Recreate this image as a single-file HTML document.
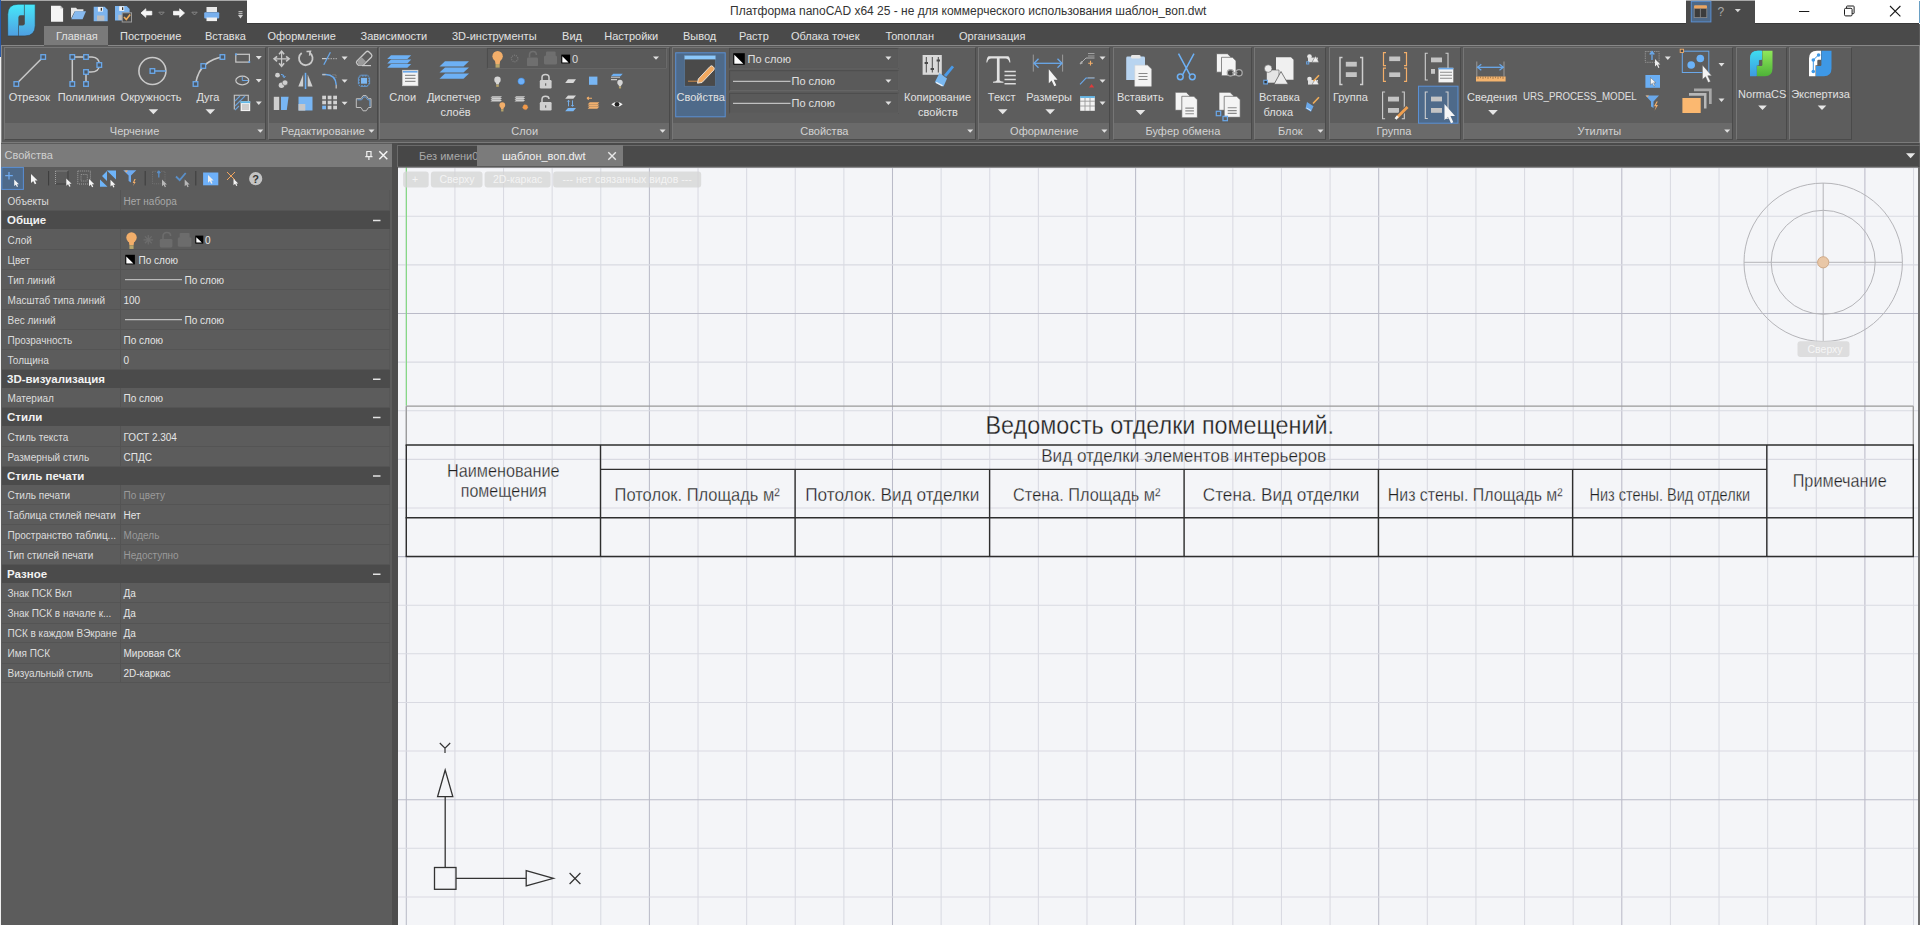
<!DOCTYPE html>
<html><head><meta charset="utf-8"><title>nanoCAD</title>
<style>html,body{margin:0;padding:0;width:1920px;height:925px;overflow:hidden;font-family:'Liberation Sans', sans-serif;}</style>
</head><body>
<div style="position:absolute;left:0px;top:0px;width:1920px;height:925px;background:#5c5c5c;"></div><div style="position:absolute;left:0px;top:0px;width:1920px;height:24px;background:#ffffff;"></div><div style="position:absolute;left:1px;top:0px;width:246px;height:24px;background:#4a4a4a;"></div><div style="position:absolute;left:1px;top:0px;width:246px;height:1px;background:#a9a9a9;"></div><div style="position:absolute;left:1686px;top:0px;width:69px;height:24px;background:#4a4a4a;"></div><div style="position:absolute;left:1686px;top:0px;width:69px;height:1px;background:#a9a9a9;"></div><div style="position:absolute;left:0px;top:0px;width:1px;height:57px;background:#2a5aa8;"></div><div style="position:absolute;left:0px;top:57px;width:1px;height:868px;background:#f0f0f0;"></div><div style="position:absolute;left:1919px;top:1px;width:1px;height:22px;background:#6aa0c4;"></div><div style="position:absolute;left:1px;top:23px;width:1918px;height:22px;background:#4a4a4a;"></div><div style="position:absolute;left:247px;top:23px;width:1439px;height:1px;background:#3a3a3a;"></div><div style="position:absolute;left:1755px;top:23px;width:164px;height:1px;background:#3a3a3a;"></div><div style="position:absolute;left:44px;top:26px;width:64px;height:20px;background:#7a7a7a;"></div><div style="position:absolute;left:1px;top:45px;width:1918px;height:98px;background:#5a5a5a;"></div><div style="position:absolute;left:1px;top:45px;width:43px;height:1px;background:#888888;"></div><div style="position:absolute;left:108px;top:45px;width:1811px;height:1px;background:#888888;"></div><div style="position:absolute;left:1px;top:142px;width:1918px;height:1px;background:#7a7a7a;"></div><div style="position:absolute;left:1px;top:45px;width:1px;height:98px;background:#888888;"></div><div style="position:absolute;left:1919px;top:45px;width:1px;height:98px;background:#888888;"></div><div style="position:absolute;left:4px;top:47px;width:260px;height:91px;background:#5d5d5d;border:1px solid #4a4a4a;border-left-color:#767676;border-top-color:#767676"></div><div style="position:absolute;left:5px;top:123px;width:260px;height:16px;background:#6a6a6a;"></div><div style="position:absolute;left:268px;top:47px;width:108px;height:91px;background:#5d5d5d;border:1px solid #4a4a4a;border-left-color:#767676;border-top-color:#767676"></div><div style="position:absolute;left:269px;top:123px;width:108px;height:16px;background:#6a6a6a;"></div><div style="position:absolute;left:379px;top:47px;width:289px;height:91px;background:#5d5d5d;border:1px solid #4a4a4a;border-left-color:#767676;border-top-color:#767676"></div><div style="position:absolute;left:380px;top:123px;width:289px;height:16px;background:#6a6a6a;"></div><div style="position:absolute;left:672px;top:47px;width:302px;height:91px;background:#5d5d5d;border:1px solid #4a4a4a;border-left-color:#767676;border-top-color:#767676"></div><div style="position:absolute;left:673px;top:123px;width:302px;height:16px;background:#6a6a6a;"></div><div style="position:absolute;left:978px;top:47px;width:130px;height:91px;background:#5d5d5d;border:1px solid #4a4a4a;border-left-color:#767676;border-top-color:#767676"></div><div style="position:absolute;left:979px;top:123px;width:130px;height:16px;background:#6a6a6a;"></div><div style="position:absolute;left:1113px;top:47px;width:137px;height:91px;background:#5d5d5d;border:1px solid #4a4a4a;border-left-color:#767676;border-top-color:#767676"></div><div style="position:absolute;left:1114px;top:123px;width:137px;height:16px;background:#6a6a6a;"></div><div style="position:absolute;left:1254px;top:47px;width:70px;height:91px;background:#5d5d5d;border:1px solid #4a4a4a;border-left-color:#767676;border-top-color:#767676"></div><div style="position:absolute;left:1255px;top:123px;width:70px;height:16px;background:#6a6a6a;"></div><div style="position:absolute;left:1329px;top:47px;width:130px;height:91px;background:#5d5d5d;border:1px solid #4a4a4a;border-left-color:#767676;border-top-color:#767676"></div><div style="position:absolute;left:1330px;top:123px;width:130px;height:16px;background:#6a6a6a;"></div><div style="position:absolute;left:1463px;top:47px;width:268px;height:91px;background:#5d5d5d;border:1px solid #4a4a4a;border-left-color:#767676;border-top-color:#767676"></div><div style="position:absolute;left:1464px;top:123px;width:268px;height:16px;background:#6a6a6a;"></div><div style="position:absolute;left:1736px;top:47px;width:49px;height:91px;background:#5d5d5d;border:1px solid #4a4a4a;border-left-color:#767676;border-top-color:#767676"></div><div style="position:absolute;left:1789px;top:47px;width:61px;height:91px;background:#5d5d5d;border:1px solid #4a4a4a;border-left-color:#767676;border-top-color:#767676"></div><div style="position:absolute;left:1px;top:143px;width:391px;height:782px;background:#5c5c5c;"></div><div style="position:absolute;left:1px;top:144px;width:391px;height:23px;background:#7b7b7b;"></div><div style="position:absolute;left:1px;top:167px;width:391px;height:23px;background:#5b5b5b;"></div><div style="position:absolute;left:392px;top:143px;width:6px;height:782px;background:#4d4d4d;"></div><div style="position:absolute;left:2px;top:190px;width:388px;height:19px;background:#5c5c5c;"></div><div style="position:absolute;left:120px;top:190px;width:1px;height:20px;background:#545454;"></div><div style="position:absolute;left:389px;top:190px;width:1px;height:20px;background:#575757;"></div><div style="position:absolute;left:2px;top:210px;width:388px;height:19px;background:#4b4b4b;"></div><div style="position:absolute;left:2px;top:229px;width:388px;height:19px;background:#5c5c5c;"></div><div style="position:absolute;left:120px;top:229px;width:1px;height:20px;background:#545454;"></div><div style="position:absolute;left:389px;top:229px;width:1px;height:20px;background:#575757;"></div><div style="position:absolute;left:2px;top:249px;width:388px;height:19px;background:#5c5c5c;"></div><div style="position:absolute;left:120px;top:249px;width:1px;height:20px;background:#545454;"></div><div style="position:absolute;left:389px;top:249px;width:1px;height:20px;background:#575757;"></div><div style="position:absolute;left:2px;top:269px;width:388px;height:19px;background:#5c5c5c;"></div><div style="position:absolute;left:120px;top:269px;width:1px;height:20px;background:#545454;"></div><div style="position:absolute;left:389px;top:269px;width:1px;height:20px;background:#575757;"></div><div style="position:absolute;left:2px;top:289px;width:388px;height:19px;background:#5c5c5c;"></div><div style="position:absolute;left:120px;top:289px;width:1px;height:20px;background:#545454;"></div><div style="position:absolute;left:389px;top:289px;width:1px;height:20px;background:#575757;"></div><div style="position:absolute;left:2px;top:309px;width:388px;height:19px;background:#5c5c5c;"></div><div style="position:absolute;left:120px;top:309px;width:1px;height:20px;background:#545454;"></div><div style="position:absolute;left:389px;top:309px;width:1px;height:20px;background:#575757;"></div><div style="position:absolute;left:2px;top:329px;width:388px;height:19px;background:#5c5c5c;"></div><div style="position:absolute;left:120px;top:329px;width:1px;height:20px;background:#545454;"></div><div style="position:absolute;left:389px;top:329px;width:1px;height:20px;background:#575757;"></div><div style="position:absolute;left:2px;top:349px;width:388px;height:19px;background:#5c5c5c;"></div><div style="position:absolute;left:120px;top:349px;width:1px;height:20px;background:#545454;"></div><div style="position:absolute;left:389px;top:349px;width:1px;height:20px;background:#575757;"></div><div style="position:absolute;left:2px;top:369px;width:388px;height:19px;background:#4b4b4b;"></div><div style="position:absolute;left:2px;top:388px;width:388px;height:18px;background:#5c5c5c;"></div><div style="position:absolute;left:120px;top:388px;width:1px;height:19px;background:#545454;"></div><div style="position:absolute;left:389px;top:388px;width:1px;height:19px;background:#575757;"></div><div style="position:absolute;left:2px;top:407px;width:388px;height:19px;background:#4b4b4b;"></div><div style="position:absolute;left:2px;top:426px;width:388px;height:19px;background:#5c5c5c;"></div><div style="position:absolute;left:120px;top:426px;width:1px;height:20px;background:#545454;"></div><div style="position:absolute;left:389px;top:426px;width:1px;height:20px;background:#575757;"></div><div style="position:absolute;left:2px;top:446px;width:388px;height:19px;background:#5c5c5c;"></div><div style="position:absolute;left:120px;top:446px;width:1px;height:20px;background:#545454;"></div><div style="position:absolute;left:389px;top:446px;width:1px;height:20px;background:#575757;"></div><div style="position:absolute;left:2px;top:466px;width:388px;height:19px;background:#4b4b4b;"></div><div style="position:absolute;left:2px;top:485px;width:388px;height:18px;background:#5c5c5c;"></div><div style="position:absolute;left:120px;top:485px;width:1px;height:19px;background:#545454;"></div><div style="position:absolute;left:389px;top:485px;width:1px;height:19px;background:#575757;"></div><div style="position:absolute;left:2px;top:504px;width:388px;height:19px;background:#5c5c5c;"></div><div style="position:absolute;left:120px;top:504px;width:1px;height:20px;background:#545454;"></div><div style="position:absolute;left:389px;top:504px;width:1px;height:20px;background:#575757;"></div><div style="position:absolute;left:2px;top:524px;width:388px;height:19px;background:#5c5c5c;"></div><div style="position:absolute;left:120px;top:524px;width:1px;height:20px;background:#545454;"></div><div style="position:absolute;left:389px;top:524px;width:1px;height:20px;background:#575757;"></div><div style="position:absolute;left:2px;top:544px;width:388px;height:19px;background:#5c5c5c;"></div><div style="position:absolute;left:120px;top:544px;width:1px;height:20px;background:#545454;"></div><div style="position:absolute;left:389px;top:544px;width:1px;height:20px;background:#575757;"></div><div style="position:absolute;left:2px;top:564px;width:388px;height:19px;background:#4b4b4b;"></div><div style="position:absolute;left:2px;top:583px;width:388px;height:18px;background:#5c5c5c;"></div><div style="position:absolute;left:120px;top:583px;width:1px;height:19px;background:#545454;"></div><div style="position:absolute;left:389px;top:583px;width:1px;height:19px;background:#575757;"></div><div style="position:absolute;left:2px;top:602px;width:388px;height:20px;background:#5c5c5c;"></div><div style="position:absolute;left:120px;top:602px;width:1px;height:21px;background:#545454;"></div><div style="position:absolute;left:389px;top:602px;width:1px;height:21px;background:#575757;"></div><div style="position:absolute;left:2px;top:623px;width:388px;height:18px;background:#5c5c5c;"></div><div style="position:absolute;left:120px;top:623px;width:1px;height:19px;background:#545454;"></div><div style="position:absolute;left:389px;top:623px;width:1px;height:19px;background:#575757;"></div><div style="position:absolute;left:2px;top:642px;width:388px;height:20px;background:#5c5c5c;"></div><div style="position:absolute;left:120px;top:642px;width:1px;height:21px;background:#545454;"></div><div style="position:absolute;left:389px;top:642px;width:1px;height:21px;background:#575757;"></div><div style="position:absolute;left:2px;top:663px;width:388px;height:18px;background:#5c5c5c;"></div><div style="position:absolute;left:120px;top:663px;width:1px;height:19px;background:#545454;"></div><div style="position:absolute;left:389px;top:663px;width:1px;height:19px;background:#575757;"></div><div style="position:absolute;left:2px;top:210px;width:388px;height:1px;background:#545454;"></div><div style="position:absolute;left:2px;top:249px;width:388px;height:1px;background:#545454;"></div><div style="position:absolute;left:2px;top:269px;width:388px;height:1px;background:#545454;"></div><div style="position:absolute;left:2px;top:289px;width:388px;height:1px;background:#545454;"></div><div style="position:absolute;left:2px;top:309px;width:388px;height:1px;background:#545454;"></div><div style="position:absolute;left:2px;top:329px;width:388px;height:1px;background:#545454;"></div><div style="position:absolute;left:2px;top:349px;width:388px;height:1px;background:#545454;"></div><div style="position:absolute;left:2px;top:369px;width:388px;height:1px;background:#545454;"></div><div style="position:absolute;left:2px;top:407px;width:388px;height:1px;background:#545454;"></div><div style="position:absolute;left:2px;top:446px;width:388px;height:1px;background:#545454;"></div><div style="position:absolute;left:2px;top:466px;width:388px;height:1px;background:#545454;"></div><div style="position:absolute;left:2px;top:504px;width:388px;height:1px;background:#545454;"></div><div style="position:absolute;left:2px;top:524px;width:388px;height:1px;background:#545454;"></div><div style="position:absolute;left:2px;top:544px;width:388px;height:1px;background:#545454;"></div><div style="position:absolute;left:2px;top:564px;width:388px;height:1px;background:#545454;"></div><div style="position:absolute;left:2px;top:602px;width:388px;height:1px;background:#545454;"></div><div style="position:absolute;left:2px;top:623px;width:388px;height:1px;background:#545454;"></div><div style="position:absolute;left:2px;top:642px;width:388px;height:1px;background:#545454;"></div><div style="position:absolute;left:2px;top:663px;width:388px;height:1px;background:#545454;"></div><div style="position:absolute;left:2px;top:682px;width:388px;height:1px;background:#545454;"></div><div style="position:absolute;left:398px;top:143px;width:1521px;height:24px;background:#4a4a4a;"></div><div style="position:absolute;left:397px;top:145px;width:1522px;height:21px;border-top:1px solid #6a6a6a;border-left:1px solid #6a6a6a"></div><div style="position:absolute;left:398px;top:146px;width:79px;height:20px;background:#474747;"></div><div style="position:absolute;left:398px;top:146px;width:79px;height:20px;overflow:hidden"><div style="position:absolute;left:21px;top:9.9px;line-height:0;white-space:pre;font-size:11px;color:#a9a9a9">Без имени0</div></div><div style="position:absolute;left:477px;top:145px;width:146px;height:21px;background:#7b7b7b;"></div><svg style="position:absolute;left:0;top:0;font-family:'Liberation Sans', sans-serif" width="1920" height="925" viewBox="0 0 1920 925"><rect x="398" y="167" width="1520" height="758" fill="#f4f5f8"/><line x1="406.30" y1="167" x2="406.30" y2="925" stroke="#babbc8" stroke-width="1.05"/><line x1="454.92" y1="167" x2="454.92" y2="925" stroke="#d9dae2" stroke-width="1.05"/><line x1="503.54" y1="167" x2="503.54" y2="925" stroke="#d9dae2" stroke-width="1.05"/><line x1="552.16" y1="167" x2="552.16" y2="925" stroke="#d9dae2" stroke-width="1.05"/><line x1="600.78" y1="167" x2="600.78" y2="925" stroke="#d9dae2" stroke-width="1.05"/><line x1="649.40" y1="167" x2="649.40" y2="925" stroke="#babbc8" stroke-width="1.05"/><line x1="698.02" y1="167" x2="698.02" y2="925" stroke="#d9dae2" stroke-width="1.05"/><line x1="746.64" y1="167" x2="746.64" y2="925" stroke="#d9dae2" stroke-width="1.05"/><line x1="795.26" y1="167" x2="795.26" y2="925" stroke="#d9dae2" stroke-width="1.05"/><line x1="843.88" y1="167" x2="843.88" y2="925" stroke="#d9dae2" stroke-width="1.05"/><line x1="892.50" y1="167" x2="892.50" y2="925" stroke="#babbc8" stroke-width="1.05"/><line x1="941.12" y1="167" x2="941.12" y2="925" stroke="#d9dae2" stroke-width="1.05"/><line x1="989.74" y1="167" x2="989.74" y2="925" stroke="#d9dae2" stroke-width="1.05"/><line x1="1038.36" y1="167" x2="1038.36" y2="925" stroke="#d9dae2" stroke-width="1.05"/><line x1="1086.98" y1="167" x2="1086.98" y2="925" stroke="#d9dae2" stroke-width="1.05"/><line x1="1135.60" y1="167" x2="1135.60" y2="925" stroke="#babbc8" stroke-width="1.05"/><line x1="1184.22" y1="167" x2="1184.22" y2="925" stroke="#d9dae2" stroke-width="1.05"/><line x1="1232.84" y1="167" x2="1232.84" y2="925" stroke="#d9dae2" stroke-width="1.05"/><line x1="1281.46" y1="167" x2="1281.46" y2="925" stroke="#d9dae2" stroke-width="1.05"/><line x1="1330.08" y1="167" x2="1330.08" y2="925" stroke="#d9dae2" stroke-width="1.05"/><line x1="1378.70" y1="167" x2="1378.70" y2="925" stroke="#babbc8" stroke-width="1.05"/><line x1="1427.32" y1="167" x2="1427.32" y2="925" stroke="#d9dae2" stroke-width="1.05"/><line x1="1475.94" y1="167" x2="1475.94" y2="925" stroke="#d9dae2" stroke-width="1.05"/><line x1="1524.56" y1="167" x2="1524.56" y2="925" stroke="#d9dae2" stroke-width="1.05"/><line x1="1573.18" y1="167" x2="1573.18" y2="925" stroke="#d9dae2" stroke-width="1.05"/><line x1="1621.80" y1="167" x2="1621.80" y2="925" stroke="#babbc8" stroke-width="1.05"/><line x1="1670.42" y1="167" x2="1670.42" y2="925" stroke="#d9dae2" stroke-width="1.05"/><line x1="1719.04" y1="167" x2="1719.04" y2="925" stroke="#d9dae2" stroke-width="1.05"/><line x1="1767.66" y1="167" x2="1767.66" y2="925" stroke="#d9dae2" stroke-width="1.05"/><line x1="1816.28" y1="167" x2="1816.28" y2="925" stroke="#d9dae2" stroke-width="1.05"/><line x1="1864.90" y1="167" x2="1864.90" y2="925" stroke="#babbc8" stroke-width="1.05"/><line x1="1913.52" y1="167" x2="1913.52" y2="925" stroke="#d9dae2" stroke-width="1.05"/><line x1="398" y1="167.64" x2="1918" y2="167.64" stroke="#d9dae2" stroke-width="1.05"/><line x1="398" y1="216.26" x2="1918" y2="216.26" stroke="#d9dae2" stroke-width="1.05"/><line x1="398" y1="264.88" x2="1918" y2="264.88" stroke="#d9dae2" stroke-width="1.05"/><line x1="398" y1="313.50" x2="1918" y2="313.50" stroke="#babbc8" stroke-width="1.05"/><line x1="398" y1="362.12" x2="1918" y2="362.12" stroke="#d9dae2" stroke-width="1.05"/><line x1="398" y1="410.74" x2="1918" y2="410.74" stroke="#d9dae2" stroke-width="1.05"/><line x1="398" y1="459.36" x2="1918" y2="459.36" stroke="#d9dae2" stroke-width="1.05"/><line x1="398" y1="507.98" x2="1918" y2="507.98" stroke="#d9dae2" stroke-width="1.05"/><line x1="398" y1="556.60" x2="1918" y2="556.60" stroke="#babbc8" stroke-width="1.05"/><line x1="398" y1="605.22" x2="1918" y2="605.22" stroke="#d9dae2" stroke-width="1.05"/><line x1="398" y1="653.84" x2="1918" y2="653.84" stroke="#d9dae2" stroke-width="1.05"/><line x1="398" y1="702.46" x2="1918" y2="702.46" stroke="#d9dae2" stroke-width="1.05"/><line x1="398" y1="751.08" x2="1918" y2="751.08" stroke="#d9dae2" stroke-width="1.05"/><line x1="398" y1="799.70" x2="1918" y2="799.70" stroke="#babbc8" stroke-width="1.05"/><line x1="398" y1="848.32" x2="1918" y2="848.32" stroke="#d9dae2" stroke-width="1.05"/><line x1="398" y1="896.94" x2="1918" y2="896.94" stroke="#d9dae2" stroke-width="1.05"/><line x1="406.3" y1="406.2" x2="1913.3" y2="406.2" stroke="#9a9a9a" stroke-width="1.3"/><line x1="406.3" y1="406.2" x2="406.3" y2="445" stroke="#9a9a9a" stroke-width="1.3"/><line x1="1913.3" y1="406.2" x2="1913.3" y2="445" stroke="#9a9a9a" stroke-width="1.3"/><line x1="405.6" y1="445" x2="1914.0" y2="445" stroke="#2e2e2e" stroke-width="1.4"/><line x1="600.5" y1="469.4" x2="1766.8" y2="469.4" stroke="#2e2e2e" stroke-width="1.4"/><line x1="405.6" y1="517.7" x2="1914.0" y2="517.7" stroke="#2e2e2e" stroke-width="1.4"/><line x1="405.6" y1="556.5" x2="1914.0" y2="556.5" stroke="#2e2e2e" stroke-width="1.4"/><line x1="406.3" y1="445" x2="406.3" y2="556.5" stroke="#2e2e2e" stroke-width="1.4"/><line x1="600.5" y1="445" x2="600.5" y2="556.5" stroke="#2e2e2e" stroke-width="1.4"/><line x1="1766.8" y1="445" x2="1766.8" y2="556.5" stroke="#2e2e2e" stroke-width="1.4"/><line x1="1913.3" y1="445" x2="1913.3" y2="556.5" stroke="#2e2e2e" stroke-width="1.4"/><line x1="795.1" y1="469.4" x2="795.1" y2="556.5" stroke="#2e2e2e" stroke-width="1.4"/><line x1="989.6" y1="469.4" x2="989.6" y2="556.5" stroke="#2e2e2e" stroke-width="1.4"/><line x1="1184.1" y1="469.4" x2="1184.1" y2="556.5" stroke="#2e2e2e" stroke-width="1.4"/><line x1="1378.4" y1="469.4" x2="1378.4" y2="556.5" stroke="#2e2e2e" stroke-width="1.4"/><line x1="1572.6" y1="469.4" x2="1572.6" y2="556.5" stroke="#2e2e2e" stroke-width="1.4"/><line x1="406.4" y1="167" x2="406.4" y2="405.6" stroke="#86d986" stroke-width="1.2"/><text x="985.5" y="433.6" font-size="25" fill="#1e1e1e" stroke="#f4f5f8" stroke-width="0.3" textLength="348.5" lengthAdjust="spacingAndGlyphs">Ведомость отделки помещений.</text><text x="1041.2" y="462.3" font-size="18.5" fill="#1e1e1e" stroke="#f4f5f8" stroke-width="0.3" textLength="285.0" lengthAdjust="spacingAndGlyphs">Вид отделки элементов интерьеров</text><text x="447" y="477.4" font-size="18.5" fill="#1e1e1e" stroke="#f4f5f8" stroke-width="0.3" textLength="112.5" lengthAdjust="spacingAndGlyphs">Наименование</text><text x="460.8" y="497.2" font-size="18.5" fill="#1e1e1e" stroke="#f4f5f8" stroke-width="0.3" textLength="85.8" lengthAdjust="spacingAndGlyphs">помещения</text><text x="614.6" y="501.1" font-size="18.5" fill="#1e1e1e" stroke="#f4f5f8" stroke-width="0.3" textLength="165.2" lengthAdjust="spacingAndGlyphs">Потолок. Площадь м²</text><text x="805.2" y="501.1" font-size="18.5" fill="#1e1e1e" stroke="#f4f5f8" stroke-width="0.3" textLength="174.1" lengthAdjust="spacingAndGlyphs">Потолок. Вид отделки</text><text x="1013.1" y="501.1" font-size="18.5" fill="#1e1e1e" stroke="#f4f5f8" stroke-width="0.3" textLength="147.3" lengthAdjust="spacingAndGlyphs">Стена. Площадь м²</text><text x="1202.8" y="501.1" font-size="18.5" fill="#1e1e1e" stroke="#f4f5f8" stroke-width="0.3" textLength="156.6" lengthAdjust="spacingAndGlyphs">Стена. Вид отделки</text><text x="1387.8" y="501.1" font-size="18.5" fill="#1e1e1e" stroke="#f4f5f8" stroke-width="0.3" textLength="174.8" lengthAdjust="spacingAndGlyphs">Низ стены. Площадь м²</text><text x="1589.5" y="501.1" font-size="18.5" fill="#1e1e1e" stroke="#f4f5f8" stroke-width="0.3" textLength="160.6" lengthAdjust="spacingAndGlyphs">Низ стены. Вид отделки</text><text x="1792.7" y="487.1" font-size="18.5" fill="#1e1e1e" stroke="#f4f5f8" stroke-width="0.3" textLength="94.0" lengthAdjust="spacingAndGlyphs">Примечание</text><rect x="434.5" y="867.5" width="21.5" height="21.8" fill="none" stroke="#333333" stroke-width="1.3"/><line x1="445.2" y1="867.5" x2="445.2" y2="796.6" stroke="#333333" stroke-width="1.3"/><path d="M445.2 770 L437.6 796.6 L452.8 796.6 Z" fill="none" stroke="#333333" stroke-width="1.3" stroke-linejoin="miter"/><line x1="456" y1="878.3" x2="526.2" y2="878.3" stroke="#333333" stroke-width="1.3"/><path d="M553.5 878.3 L526.2 870.7 L526.2 886 Z" fill="none" stroke="#333333" stroke-width="1.3"/><path d="M439.8 743 L445 748.2 L450.2 743 M445 748.2 L445 753" fill="none" stroke="#333333" stroke-width="1.2"/><path d="M569.6 873 L580.4 884 M580.4 873 L569.6 884" fill="none" stroke="#333333" stroke-width="1.2"/><circle cx="1823.2" cy="262.3" r="79.2" fill="none" stroke="#b4b4b8" stroke-width="1"/><circle cx="1823.2" cy="262.3" r="52" fill="none" stroke="#b4b4b8" stroke-width="1"/><line x1="1744" y1="262.3" x2="1902.4" y2="262.3" stroke="#b4b4b8" stroke-width="1"/><line x1="1823.2" y1="183" x2="1823.2" y2="341.5" stroke="#b4b4b8" stroke-width="1"/><circle cx="1823.2" cy="262.3" r="5.6" fill="#e9c7a6" stroke="#cfa987" stroke-width="1"/><rect x="1797.5" y="341.2" width="52" height="15.8" rx="3" fill="#dadada" fill-opacity="0.9"/><text x="1807.5" y="353" font-size="10.5" fill="#f6f6f6">Сверху</text><rect x="403.1" y="171.6" width="25.6" height="15.8" rx="3" fill="#d4d4d4" fill-opacity="0.75"/><text x="412" y="183.3" font-size="10.5" fill="#f4f4f4">+</text><rect x="430.9" y="171.6" width="51.6" height="15.8" rx="3" fill="#d4d4d4" fill-opacity="0.75"/><text x="439.5" y="183.3" font-size="10.5" fill="#f4f4f4">Сверху</text><rect x="484.6" y="171.6" width="66.0" height="15.8" rx="3" fill="#d4d4d4" fill-opacity="0.75"/><text x="493" y="183.3" font-size="10.5" fill="#f4f4f4">2D-каркас</text><rect x="553.1" y="171.6" width="148.1" height="15.8" rx="3" fill="#d4d4d4" fill-opacity="0.75"/><text x="562.5" y="183.3" font-size="10.5" fill="#f4f4f4">--- нет связанных видов ---</text><rect x="1918" y="167" width="2" height="758" fill="#6e6e6e"/><rect x="398" y="166.5" width="1520" height="1.2" fill="#6a6a6a"/></svg><svg style="position:absolute;left:0;top:0;font-family:'Liberation Sans', sans-serif" width="1920" height="925" viewBox="0 0 1920 925"><defs><linearGradient id="lg1" x1="0" y1="0" x2="0" y2="1"><stop offset="0" stop-color="#46e8f9"/><stop offset="1" stop-color="#4f9fe2"/></linearGradient><linearGradient id="ncs" x1="0" y1="0" x2="1" y2="1"><stop offset="0" stop-color="#3fe0f0"/><stop offset="1" stop-color="#3f8fe0"/></linearGradient></defs><path d="M7.7 35.9 L7.7 14.5 Q7.7 4.3 18 4.3 L35.2 4.3 L35.2 25.5 Q35.2 35.9 25 35.9 Z" fill="url(#lg1)" stroke="#2f3f48" stroke-width="0.6"/><path d="M18.4 17.5 Q18.4 15.2 20.6 15.2 L24.8 15.2 L24.8 23.3 Q24.8 25.5 22.6 25.5 L18.4 25.5 Z" fill="#4a4a4a"/><line x1="24.4" y1="4.3" x2="24.4" y2="15.5" stroke="#3a4a55" stroke-width="0.7"/><line x1="18.5" y1="25.3" x2="18.5" y2="35.9" stroke="#3a4a55" stroke-width="0.7"/><path d="M51 5.8 L60.5 5.8 L63.1 8.4 L63.1 21.7 L51 21.7 Z" fill="#f4f4f4"/><path d="M60.5 5.8 L60.5 8.4 L63.1 8.4" fill="#bdbdbd"/><path d="M71 18.5 L71 7.8 L76 7.8 L77.3 9.3 L83.4 9.3 L83.4 11.5 L74.6 11.5 Z" fill="#e6e6e6"/><path d="M71.3 19.2 L75 11.2 L86 11.2 L82.6 19.2 Z" fill="#86b9ee"/><path d="M93.7 6.7 L104.7 6.7 L107.7 9.7 L107.7 21.3 L93.7 21.3 Z" fill="#7cb4ee"/><rect x="97.9" y="7.0" width="5" height="4.6" fill="#f2f2f2"/><rect x="100.7" y="7.9" width="1.3" height="2.8" fill="#333"/><rect x="97.0" y="15.5" width="7.4" height="5.2" fill="#bdbdbd"/><path d="M115 6 L126.6 6 L129.6 9 L129.6 20.5 L115 20.5 Z" fill="#7cb4ee"/><rect x="119.2" y="6.3" width="5" height="4.6" fill="#f2f2f2"/><rect x="122" y="7.2" width="1.3" height="2.8" fill="#333"/><rect x="118.3" y="14.8" width="7.4" height="5.2" fill="#bdbdbd"/><rect x="122.2" y="12.8" width="9.3" height="9.2" fill="#4a4a4a" stroke="#9a9a9a" stroke-width="1"/><path d="M124 17 L126.3 19.6 L130.2 14.6" fill="none" stroke="#f2ae5a" stroke-width="1.6"/><path d="M141 13 L145.8 8.8 L145.8 11.3 L151.8 11.3 L151.8 14.9 L145.8 14.9 L145.8 17.3 Z" fill="#f6f6f6" stroke="#f6f6f6" stroke-width="0.8" stroke-linejoin="round"/><path d="M184.5 13 L179.7 8.8 L179.7 11.3 L173.5 11.3 L173.5 14.9 L179.7 14.9 L179.7 17.3 Z" fill="#f6f6f6" stroke="#f6f6f6" stroke-width="0.8" stroke-linejoin="round"/><path d="M158.8 12.2 L164.2 12.2 L161.5 15 Z" fill="none" stroke="#8a8a8a" stroke-width="0.9"/><path d="M191.8 12.2 L197.2 12.2 L194.5 15 Z" fill="none" stroke="#8a8a8a" stroke-width="0.9"/><rect x="206.5" y="7" width="10.5" height="5" fill="#e8e8e8"/><rect x="204.2" y="12.2" width="15" height="6.2" rx="1" fill="#78b0ee"/><rect x="206.5" y="17.5" width="10.5" height="3.6" fill="#f0f0f0"/><rect x="238.5" y="11.2" width="4" height="1" fill="#cfcfcf"/><rect x="238.5" y="13.2" width="4" height="1" fill="#cfcfcf"/><path d="M238 15 L243 15 L240.5 18.5 Z" fill="#cfcfcf"/><line x1="1799" y1="11.5" x2="1809.3" y2="11.5" stroke="#1a1a1a" stroke-width="1"/><rect x="1844.5" y="8.3" width="7.6" height="7.6" rx="1.2" fill="none" stroke="#1a1a1a" stroke-width="1"/><path d="M1846.6 8.2 L1846.6 6.6 Q1846.6 6 1847.3 6 L1853.4 6 Q1854.1 6 1854.1 6.7 L1854.1 12.9 Q1854.1 13.6 1853.4 13.6 L1852.2 13.6" fill="none" stroke="#1a1a1a" stroke-width="1"/><path d="M1890 6 L1900.4 16.4 M1900.4 6 L1890 16.4" stroke="#1a1a1a" stroke-width="1.1"/><rect x="1691.3" y="1.3" width="19.6" height="20.6" fill="#4e6988" stroke="#5b90d2" stroke-width="1"/><rect x="1694.2" y="8" width="12.6" height="9.6" fill="#3c3c3c" stroke="#8a8a8a" stroke-width="0.8"/><rect x="1694" y="5.2" width="13" height="3.2" rx="1" fill="#eaa562"/><line x1="1700.4" y1="8.2" x2="1700.4" y2="17.5" stroke="#8a8a8a" stroke-width="0.8"/><text x="1717.6" y="16" font-size="12" fill="#a9a9a9">?</text><path d="M1734.80 8.90 L1740.80 8.90 L1737.8 12.30 Z" fill="#d8d8d8"/><line x1="16.3" y1="84" x2="43.2" y2="57" stroke="#c9c9c9" stroke-width="1.5"/><rect x="14.00" y="81.70" width="4.6" height="4.6" fill="#4c5866" stroke="#6aa8ea" stroke-width="1.3"/><rect x="40.90" y="54.70" width="4.6" height="4.6" fill="#4c5866" stroke="#6aa8ea" stroke-width="1.3"/><path d="M72.3 84 L72.3 57 L92 57 Q99.5 57.5 99.5 65 Q99 72 91 72 L86 72 L86 84" fill="none" stroke="#c9c9c9" stroke-width="1.5"/><rect x="70.00" y="54.70" width="4.6" height="4.6" fill="#4c5866" stroke="#6aa8ea" stroke-width="1.3"/><rect x="83.70" y="54.70" width="4.6" height="4.6" fill="#4c5866" stroke="#6aa8ea" stroke-width="1.3"/><rect x="97.00" y="62.70" width="4.6" height="4.6" fill="#4c5866" stroke="#6aa8ea" stroke-width="1.3"/><rect x="83.70" y="69.70" width="4.6" height="4.6" fill="#4c5866" stroke="#6aa8ea" stroke-width="1.3"/><rect x="70.00" y="81.70" width="4.6" height="4.6" fill="#4c5866" stroke="#6aa8ea" stroke-width="1.3"/><rect x="83.70" y="81.70" width="4.6" height="4.6" fill="#4c5866" stroke="#6aa8ea" stroke-width="1.3"/><circle cx="152.4" cy="71" r="13.5" fill="none" stroke="#c9c9c9" stroke-width="1.6"/><line x1="152.4" y1="71" x2="166" y2="71" stroke="#6aa8ea" stroke-width="1.5"/><rect x="150.10" y="68.70" width="4.6" height="4.6" fill="#4c5866" stroke="#6aa8ea" stroke-width="1.3"/><path d="M148.60 109.2 L158.20 109.2 L153.4 114.2 Z" fill="#e6e6e6"/><path d="M205.50 109.2 L215.10 109.2 L210.3 114.2 Z" fill="#e6e6e6"/><path d="M195.5 84 Q198 70 206 64 Q213 58.5 222.4 57" fill="none" stroke="#c9c9c9" stroke-width="1.6"/><rect x="193.20" y="81.70" width="4.6" height="4.6" fill="#4c5866" stroke="#6aa8ea" stroke-width="1.3"/><rect x="201.00" y="63.70" width="4.6" height="4.6" fill="#4c5866" stroke="#6aa8ea" stroke-width="1.3"/><rect x="220.10" y="54.70" width="4.6" height="4.6" fill="#4c5866" stroke="#6aa8ea" stroke-width="1.3"/><rect x="235.8" y="54.3" width="13.6" height="7.8" fill="none" stroke="#c9c9c9" stroke-width="1.2"/><circle cx="236" cy="54.4" r="1.1" fill="#6aa8ea"/><circle cx="249.3" cy="62" r="1.1" fill="#6aa8ea"/><ellipse cx="242.3" cy="80.5" rx="6.5" ry="4.3" fill="none" stroke="#c9c9c9" stroke-width="1.2"/><path d="M242.3 77 L242.3 80.5 L248 80.5" fill="none" stroke="#6aa8ea" stroke-width="1"/><path d="M234.3 109.5 L234.3 95.3 L248.3 95.3 L248.3 101" fill="none" stroke="#c9c9c9" stroke-width="1.1"/><path d="M235 101 L240 96 M235 106 L245 96 M235 110 L239 106" stroke="#6aa0d8" stroke-width="1.1"/><rect x="240.6" y="101.3" width="9.6" height="9.8" fill="#f2f2f2"/><rect x="240.6" y="101.3" width="9.6" height="1.8" fill="#60b8e8"/><path d="M242 105 H249 M242 107 H249 M242 109 H249" stroke="#9a9a9a" stroke-width="0.8"/><path d="M255.80 56.00 L261.80 56.00 L258.8 59.40 Z" fill="#e0e0e0"/><path d="M255.80 79.00 L261.80 79.00 L258.8 82.40 Z" fill="#e0e0e0"/><path d="M255.80 101.60 L261.80 101.60 L258.8 105.00 Z" fill="#e0e0e0"/><path d="M257.30 129.40 L263.30 129.40 L260.3 132.80 Z" fill="#e0e0e0"/><path d="M281.6 51.8 V65.8 M274.6 58.8 H288.6" stroke="#c9c9c9" stroke-width="1.2"/><path d="M279.1 54.3 L281.6 51.3 L284.1 54.3 M279.1 63.3 L281.6 66.3 L284.1 63.3 M277.1 56.3 L274.1 58.8 L277.1 61.3 M286.1 56.3 L289.1 58.8 L286.1 61.3" fill="none" stroke="#c9c9c9" stroke-width="1.6"/><path d="M309.3 52.6 A6.8 6.8 0 1 1 301.7 53" fill="none" stroke="#c9c9c9" stroke-width="1.8"/><path d="M306.5 51.5 L310.5 51.3 L309.5 55.6" fill="none" stroke="#c9c9c9" stroke-width="1.5"/><path d="M322 58.6 H327" stroke="#c9c9c9" stroke-width="1.2"/><path d="M328 58.6 H338" stroke="#a0a0a0" stroke-width="1.2" stroke-dasharray="1.5 1"/><path d="M323.8 64.8 L330.4 52.2" stroke="#6aa8ea" stroke-width="1.3"/><path d="M341.60 56.60 L347.60 56.60 L344.6 60.00 Z" fill="#e0e0e0"/><path d="M357 61 L366 52 Q367.5 50.6 369 52 L371.3 54.3 Q372.6 55.8 371.3 57.2 L363 65.4 L358.6 65.4 L357 63.8 Q355.8 62.4 357 61 Z" fill="none" stroke="#c9c9c9" stroke-width="1.3"/><path d="M357.5 61 L361.5 57 L366 61.5 L362 65.4 L358.6 65.4 Z" fill="#9a9a9a"/><line x1="362" y1="65.6" x2="371" y2="65.6" stroke="#c9c9c9" stroke-width="1.2"/><circle cx="277.5" cy="75.2" r="2.4" fill="#cfcfcf"/><circle cx="281.5" cy="85.2" r="2.8" fill="#cfcfcf"/><circle cx="285" cy="82.7" r="2.8" fill="#cfcfcf" stroke="#5d5d5d" stroke-width="0.6"/><path d="M281 74.5 Q283.5 74.3 284 76.8" fill="none" stroke="#6aa8ea" stroke-width="1.1"/><path d="M282.8 76.3 L284.2 77.8 L285.4 76" fill="none" stroke="#6aa8ea" stroke-width="1"/><path d="M298.3 86.5 L303.2 74.5 L303.2 86.5 Z" fill="#cfcfcf"/><path d="M312.6 86.5 L307.7 74.5 L307.7 86.5 Z" fill="#cfcfcf"/><line x1="305.5" y1="72.8" x2="305.5" y2="89" stroke="#6db0f4" stroke-width="1.6"/><path d="M322.3 74.6 H325.6 Q335.6 74.8 336.2 85" fill="none" stroke="#6aa8ea" stroke-width="1.5"/><path d="M322.3 74.6 H325.6" stroke="#bdbdbd" stroke-width="1.3"/><path d="M336.2 85 V88.4" stroke="#bdbdbd" stroke-width="1.3"/><path d="M332.5 74.8 H336 V78" fill="none" stroke="#a0a0a0" stroke-width="0.8" stroke-dasharray="1 1"/><path d="M341.60 79.40 L347.60 79.40 L344.6 82.80 Z" fill="#e0e0e0"/><rect x="361" y="77.9" width="6" height="5.8" fill="#7db8f2"/><rect x="359.2" y="76" width="9.6" height="9.6" fill="none" stroke="#5fa0e0" stroke-width="0.9" stroke-dasharray="1.6 1.2"/><path d="M358.4 77.5 V84.2 M369.6 77.5 V84.2 M360.5 75.2 H367.5 M360.5 86.4 H367.5" stroke="#6aa8ea" stroke-width="0.8"/><rect x="273.8" y="96.8" width="5.4" height="13.2" fill="#cfcfcf"/><path d="M281 96.8 L288.6 96.8 L286.8 110 L281 110 Z" fill="#78b6f4"/><rect x="298.5" y="96.7" width="14" height="13.8" fill="#78b6f4"/><rect x="298.5" y="104" width="6.8" height="6.6" fill="#c6c6c6"/><rect x="322.2" y="95.7" width="3.8" height="3.6" fill="#d2d2d2"/><rect x="322.2" y="100.7" width="3.8" height="3.6" fill="#d2d2d2"/><rect x="322.2" y="105.7" width="3.8" height="3.6" fill="#78b6f4"/><rect x="327.7" y="95.7" width="3.8" height="3.6" fill="#d2d2d2"/><rect x="327.7" y="100.7" width="3.8" height="3.6" fill="#d2d2d2"/><rect x="327.7" y="105.7" width="3.8" height="3.6" fill="#d2d2d2"/><rect x="333.2" y="95.7" width="3.8" height="3.6" fill="#d2d2d2"/><rect x="333.2" y="100.7" width="3.8" height="3.6" fill="#d2d2d2"/><rect x="333.2" y="105.7" width="3.8" height="3.6" fill="#d2d2d2"/><path d="M341.60 101.70 L347.60 101.70 L344.6 105.10 Z" fill="#e0e0e0"/><path d="M356.3 98.7 H361 L363 95.6 H366.2 L368.5 98.7 H371 V107.5 H368.5 L366.2 110.8 H363 L361 107.5 H356.3 Z" fill="none" stroke="#c0c0c0" stroke-width="1"/><path d="M357.4 99.8 H361.6 L363.6 96.9 H365.6 L367.8 99.8 H369.9 V106.4" fill="none" stroke="#6aa8ea" stroke-width="0.9"/><path d="M368.50 129.40 L374.50 129.40 L371.5 132.80 Z" fill="#e0e0e0"/><path d="M391.0 55.3 L411.2 55.3 L407.4 59.099999999999994 L387.2 59.099999999999994 Z" fill="#6db0f4"/><path d="M391.0 59.599999999999994 L411.2 59.599999999999994 L407.4 63.39999999999999 L387.2 63.39999999999999 Z" fill="#6db0f4"/><path d="M391.0 63.9 L411.2 63.9 L407.4 67.7 L387.2 67.7 Z" fill="#6db0f4"/><rect x="402.5" y="70.2" width="15.5" height="15.6" fill="#f4f4f4" stroke="#d0d0d0" stroke-width="0.6"/><rect x="403" y="71" width="14.5" height="1.6" fill="#6aa8ea"/><path d="M405 75.3 H415.5 M405 78.3 H415.5 M405 81.3 H415.5" stroke="#8f8f8f" stroke-width="1.3"/><path d="M445.0 61.3 L469.0 61.3 L463.5 66.5 L439.5 66.5 Z" fill="#6db0f4"/><path d="M445.0 67.39999999999999 L469.0 67.39999999999999 L463.5 72.6 L439.5 72.6 Z" fill="#6db0f4"/><path d="M445.0 73.5 L469.0 73.5 L463.5 78.7 L439.5 78.7 Z" fill="#6db0f4"/><rect x="487.4" y="48.4" width="179" height="20" fill="#5a5a5a" stroke="#4c4c4c" stroke-width="1"/><path d="M487.4 68.4 H666.5 V48.4" fill="none" stroke="#6a6a6a" stroke-width="1"/><circle cx="497.6" cy="56.2" r="5.2" fill="#f2ae6a"/><path d="M494.74 59.32 L500.46 59.32 L499.68 64.00 L495.52 64.00 Z" fill="#f2ae6a"/><rect x="495.52" y="64.00" width="4.16" height="3.64" fill="#b8a56a"/><circle cx="514.6" cy="58.5" r="3.2" fill="none" stroke="#7a7a7a" stroke-width="1.4" stroke-dasharray="1 1"/><path d="M529.5 57.5 V55 Q529.5 51.5 533 51.5 Q536.4 51.5 536.4 55" fill="none" stroke="#6f6f6f" stroke-width="1.6"/><rect x="527" y="57.5" width="11" height="8.6" rx="1.2" fill="#6f6f6f"/><rect x="546" y="51.5" width="9.6" height="5" rx="1" fill="#6f6f6f"/><rect x="544" y="55.5" width="13" height="9" rx="1.5" fill="#6f6f6f"/><rect x="561.3" y="54.6" width="8.8" height="8.8" fill="#000"/><path d="M562.3 56.2 L568.5999999999999 62.400000000000006 L562.3 62.400000000000006 Z" fill="#fff"/><text x="572" y="62.7" font-size="11" fill="#dcdcdc">0</text><path d="M653.00 56.40 L659.00 56.40 L656 59.80 Z" fill="#e0e0e0"/><circle cx="497.5" cy="79.8" r="3.2" fill="#d6d6d6"/><path d="M495.74 81.72 L499.26 81.72 L498.78 84.60 L496.22 84.60 Z" fill="#d6d6d6"/><rect x="496.22" y="84.60" width="2.56" height="2.24" fill="#b8a56a"/><circle cx="521.3" cy="81.3" r="3.3" fill="#6fb0f8" stroke="#3b8ee8" stroke-width="1" stroke-dasharray="1 0.8"/><path d="M542 80 V77.5 Q542 74.6 545.5 74.6 Q549 74.6 549 77.5 V80" fill="none" stroke="#d0d0d0" stroke-width="1.5"/><rect x="539.8" y="80" width="11.8" height="8.4" rx="1.2" fill="#d0d0d0"/><rect x="545.2" y="83.3" width="1" height="2.4" fill="#555"/><path d="M565.2 83 L568 79.3 L576 79.3 L573.3 83 Z" fill="#d8d8d8"/><rect x="589" y="76.6" width="8.4" height="8.2" fill="#78b6f4"/><path d="M613.2 73.7 L622.7 73.7 L620.5 76.3 L611 76.3 Z" fill="#6db0f4"/><path d="M611 77.3 H620 M611 79.6 H617" stroke="#c8c8c8" stroke-width="1.1"/><circle cx="620" cy="82.5" r="2.7" fill="#d6d6d6"/><path d="M618.51 84.12 L621.49 84.12 L621.08 86.55 L618.92 86.55 Z" fill="#d6d6d6"/><rect x="618.92" y="86.55" width="2.16" height="1.89" fill="#b8a56a"/><path d="M492.1 96.2 L502.0 96.2 L500.4 97.8 L490.5 97.8 Z" fill="#cfcfcf"/><path d="M492.1 98.10000000000001 L502.0 98.10000000000001 L500.4 99.7 L490.5 99.7 Z" fill="#cfcfcf"/><path d="M492.1 100.0 L502.0 100.0 L500.4 101.6 L490.5 101.6 Z" fill="#cfcfcf"/><circle cx="502.3" cy="105.10000000000001" r="2.9" fill="#f2ae6a"/><path d="M500.70 106.84 L503.90 106.84 L503.46 109.45 L501.14 109.45 Z" fill="#f2ae6a"/><rect x="501.14" y="109.45" width="2.32" height="2.03" fill="#b8a56a"/><path d="M516.1 96.2 L525.1 96.2 L523.5 97.8 L514.5 97.8 Z" fill="#cfcfcf"/><path d="M516.1 98.10000000000001 L525.1 98.10000000000001 L523.5 99.7 L514.5 99.7 Z" fill="#cfcfcf"/><path d="M516.1 100.0 L525.1 100.0 L523.5 101.6 L514.5 101.6 Z" fill="#cfcfcf"/><circle cx="525.3" cy="107.2" r="2.4" fill="#f29a4a" stroke="#f29a4a" stroke-width="0.8" stroke-dasharray="0.9 0.6"/><path d="M542 102 V99.5 Q542 96.3 545.5 96.3 Q549 96.3 549 99" fill="none" stroke="#d0d0d0" stroke-width="1.5"/><rect x="539.8" y="102" width="11.8" height="8.4" rx="1.2" fill="#d0d0d0"/><rect x="545.2" y="105.3" width="1" height="2.4" fill="#555"/><path d="M565.2 98.7 L568 95.6 L576 95.6 L573.3 98.7 Z" fill="#d8d8d8"/><path d="M565.2 111.3 L568 108.1 L576 108.1 L573.3 111.3 Z" fill="#78b6f4"/><path d="M568.5 106.3 V100.4 M567.3 101.6 L568.5 100.3 L569.7 101.6 M572.5 100.4 V106.3 M571.3 105 L572.5 106.3 L573.7 105" fill="none" stroke="#78b6f4" stroke-width="0.9"/><path d="M587 98.3 L592 98.3 M587 98.3 L588.8 97 M587 98.3 L588.8 99.6" stroke="#f2ae6a" stroke-width="1.1" fill="none"/><path d="M589.7 102.3 L599.3000000000001 102.3 L597.3000000000001 104.5 L587.7 104.5 Z" fill="#f2b06e"/><path d="M589.7 104.39999999999999 L599.3000000000001 104.39999999999999 L597.3000000000001 106.6 L587.7 106.6 Z" fill="#f2b06e"/><path d="M589.7 106.5 L599.3000000000001 106.5 L597.3000000000001 108.7 L587.7 108.7 Z" fill="#f2b06e"/><path d="M611.3 104.3 Q617 99.3 622.7 104.3 Q617 109.3 611.3 104.3 Z" fill="#f4f4f4"/><circle cx="617" cy="104.3" r="2.4" fill="#222"/><path d="M659.60 129.40 L665.60 129.40 L662.6 132.80 Z" fill="#e0e0e0"/><rect x="675.7" y="52.8" width="49.5" height="64" fill="#4e6a8a" stroke="#5a90d4" stroke-width="1"/><rect x="684.5" y="55.6" width="31" height="30.6" fill="#4a4a4a" stroke="#5c7fa5" stroke-width="0.6"/><rect x="684.5" y="55.6" width="31" height="3.8" fill="#8cc8fb"/><path d="M688 81.2 H698 L699.5 79.5" fill="none" stroke="#d38d4a" stroke-width="1"/><path d="M698.3 79 L710 66.5 Q711.5 65 713 66.5 L713.7 67.3 Q715 68.8 713.7 70.2 L702 82.5 L697.5 83.2 Z" fill="#f0a860" stroke="#f4f4f4" stroke-width="0.8"/><rect x="729.6" y="48.4" width="168.6" height="19.8" fill="#5a5a5a" stroke="#4c4c4c" stroke-width="1"/><path d="M729.6 68.2 H898.2 V48.4" fill="none" stroke="#656565" stroke-width="1"/><rect x="729.6" y="70.7" width="168.6" height="19.8" fill="#5a5a5a" stroke="#4c4c4c" stroke-width="1"/><path d="M729.6 90.5 H898.2 V70.7" fill="none" stroke="#656565" stroke-width="1"/><rect x="729.6" y="93.3" width="168.6" height="19.8" fill="#5a5a5a" stroke="#4c4c4c" stroke-width="1"/><path d="M729.6 113.1 H898.2 V93.3" fill="none" stroke="#656565" stroke-width="1"/><rect x="733.3" y="53.2" width="11.5" height="11.5" fill="#000"/><path d="M734.3 54.800000000000004 L743.3 63.7 L734.3 63.7 Z" fill="#fff"/><line x1="733" y1="81.3" x2="790.5" y2="81.3" stroke="#d8d8d8" stroke-width="1"/><line x1="733" y1="103.4" x2="790.5" y2="103.4" stroke="#c0c0c0" stroke-width="1.4"/><path d="M885.40 56.60 L891.40 56.60 L888.4 60.00 Z" fill="#e0e0e0"/><path d="M885.40 79.40 L891.40 79.40 L888.4 82.80 Z" fill="#e0e0e0"/><path d="M885.40 101.60 L891.40 101.60 L888.4 105.00 Z" fill="#e0e0e0"/><rect x="922.6" y="55" width="19.2" height="19.8" fill="#d9d9d9"/><path d="M926.3 57 V72.5 M932.3 57 V72.5 M938.3 57 V72.5" stroke="#4a4a4a" stroke-width="1"/><rect x="924.6" y="62" width="3.4" height="2" fill="#4a4a4a"/><rect x="930.6" y="68" width="3.4" height="2" fill="#4a4a4a"/><rect x="936.6" y="59.5" width="3.4" height="2" fill="#4a4a4a"/><path d="M953 66.3 L945 76" stroke="#4a9ae8" stroke-width="2.8"/><path d="M939.5 73 L947 78.5 L943.5 86.5 L934.8 82.3 Z" fill="#7ab8f0"/><path d="M936 82.3 L942.6 85.8" stroke="#e8f2fb" stroke-width="1.4"/><path d="M967.20 129.40 L973.20 129.40 L970.2 132.80 Z" fill="#e0e0e0"/><path d="M986.3 62.5 Q986.8 57.3 988.5 56.2 L1008.3 56.2 Q1010 57.3 1010.4 62.5 L1009.5 62.5 Q1008.5 58.7 1005.5 58.5 L999.6 58.5 L999.6 80.2 Q1000 81.5 1003.5 81.8 L1003.5 82.8 L993 82.8 L993 81.8 Q996.5 81.5 996.9 80.2 L996.9 58.5 L991.2 58.5 Q988.2 58.7 987.2 62.5 Z" fill="#e2e2e2"/><path d="M1004.5 71.5 H1015.8 M1004.5 75.5 H1015.8 M1004.5 79.5 H1015.8 M1004.5 83.7 H1015.8" stroke="#dcdcdc" stroke-width="1.6"/><path d="M997.90 109.2 L1007.50 109.2 L1002.7 114.2 Z" fill="#e6e6e6"/><path d="M1033.3 54.6 V71.6 M1062.6 54.6 V71.6" stroke="#9a9a9a" stroke-width="1"/><path d="M1034 63.3 H1062" stroke="#6aa8ea" stroke-width="1.3"/><path d="M1038.5 58.7 L1034 63.3 L1038.5 67.8 M1057.5 58.7 L1062 63.3 L1057.5 67.8" fill="none" stroke="#6aa8ea" stroke-width="1.3"/><path d="M1048.8 69.3 V83.2 L1051.6 80.5 L1054.3 86.3 L1056.3 85.3 L1053.7 79.7 L1057.5 79.7 Z" fill="#f4f4f4"/><path d="M1045.40 109.2 L1055.00 109.2 L1050.2 114.2 Z" fill="#e6e6e6"/><path d="M1080 64 L1086 58 H1094.5" fill="none" stroke="#b0b0b0" stroke-width="1"/><path d="M1088 53.5 H1094.5 M1088 56 H1094.5" stroke="#a0a0a0" stroke-width="1"/><path d="M1080 64 L1081.6 61.2 M1080 64 L1082.8 62.8" stroke="#b0b0b0" stroke-width="1"/><path d="M1090.5 60.8 V65.5 M1088.2 63.2 H1092.8" stroke="#f2ae6a" stroke-width="1.1"/><path d="M1080 84.3 L1086 78 H1094.5" fill="none" stroke="#6aa8ea" stroke-width="1.1"/><path d="M1088 77.8 H1094.5" stroke="#a0a0a0" stroke-width="1"/><path d="M1091.6 84 L1094.2 87.6 H1089 Z" fill="#e03a3a"/><rect x="1080.2" y="96.2" width="14.6" height="14.6" fill="#f2f2f2"/><rect x="1080.2" y="96.2" width="14.6" height="1.6" fill="#4aa8e0"/><path d="M1080 101.2 H1095 M1080 106 H1095 M1085 98 V111 M1090 98 V111" stroke="#9a9a9a" stroke-width="0.9"/><path d="M1099.50 56.40 L1105.50 56.40 L1102.5 59.80 Z" fill="#e0e0e0"/><path d="M1099.50 79.40 L1105.50 79.40 L1102.5 82.80 Z" fill="#e0e0e0"/><path d="M1099.50 101.60 L1105.50 101.60 L1102.5 105.00 Z" fill="#e0e0e0"/><path d="M1101.40 129.40 L1107.40 129.40 L1104.4 132.80 Z" fill="#e0e0e0"/><path d="M1126.2 58 Q1126.2 56.6 1127.6 56.6 L1143.5 56.6 Q1145 56.6 1145 58 L1145 80 L1126.2 80 Z" fill="#b8d4f0"/><rect x="1131" y="55" width="9.6" height="3.6" rx="1.4" fill="#e8e8e8"/><path d="M1134.8 65.2 L1147.5 65.2 L1151.3 69 L1151.3 86.3 L1134.8 86.3 Z" fill="#f4f4f4" stroke="#d0d0d0" stroke-width="0.5"/><path d="M1138.5 73.5 H1147.5 M1138.5 76.5 H1147.5 M1138.5 79.5 H1147.5" stroke="#8a8a8a" stroke-width="1.1"/><path d="M1135.70 110 L1145.30 110 L1140.5 115 Z" fill="#e6e6e6"/><path d="M1178.5 53.6 L1190.2 75.3 M1194 53.6 L1182.3 75.3" stroke="#6db0f4" stroke-width="1.5"/><circle cx="1180.3" cy="76.8" r="2.9" fill="none" stroke="#6db0f4" stroke-width="1.5"/><circle cx="1192.3" cy="76.8" r="2.9" fill="none" stroke="#6db0f4" stroke-width="1.5"/><path d="M1216.5 53.7 L1227.5 53.7 L1231.0 57.2 L1231.0 72.2 L1216.5 72.2 Z" fill="#f4f4f4" stroke="#5d5d5d" stroke-width="0.7"/><path d="M1221.5 57.3 L1232.5 57.3 L1236.0 60.8 L1236.0 75.8 L1221.5 75.8 Z" fill="#f4f4f4" stroke="#5d5d5d" stroke-width="0.7"/><circle cx="1230.5" cy="72.8" r="3.2" fill="#4a4a4a" stroke="#a8a8a8" stroke-width="1.3"/><circle cx="1239" cy="72.8" r="3.2" fill="#4a4a4a" stroke="#a8a8a8" stroke-width="1.3"/><line x1="1232" y1="72.8" x2="1237.5" y2="72.8" stroke="#a8a8a8" stroke-width="1.3"/><path d="M1175.2 92.3 L1186.2 92.3 L1189.7 95.8 L1189.7 110.3 L1175.2 110.3 Z" fill="#f4f4f4" stroke="#5d5d5d" stroke-width="0.7"/><path d="M1181.8 96.3 L1193.8999999999999 96.3 L1197.3999999999999 99.8 L1197.3999999999999 117.8 L1181.8 117.8 Z" fill="#f4f4f4" stroke="#5d5d5d" stroke-width="0.7"/><path d="M1185.3 108.1 H1193.8999999999999 M1185.3 110.9 H1193.8999999999999 M1185.3 113.7 H1193.8999999999999" stroke="#8a8a8a" stroke-width="1.1"/><path d="M1219 92.3 L1230.0 92.3 L1233.5 95.8 L1233.5 110.3 L1219 110.3 Z" fill="#f4f4f4" stroke="#5d5d5d" stroke-width="0.7"/><path d="M1224.2 96.3 L1236.7 96.3 L1240.2 99.8 L1240.2 117.3 L1224.2 117.3 Z" fill="#f4f4f4" stroke="#5d5d5d" stroke-width="0.7"/><path d="M1227.7 107.8 H1236.7 M1227.7 110.6 H1236.7 M1227.7 113.4 H1236.7" stroke="#8a8a8a" stroke-width="1.1"/><rect x="1216.3" y="111.3" width="4.4" height="4.4" fill="none" stroke="#6aa8ea" stroke-width="1.2"/><rect x="1223" y="116.3" width="4.4" height="4.4" fill="none" stroke="#6aa8ea" stroke-width="1.2"/><path d="M1276 57.2 L1291 57.2 L1293.5 59.7 L1293.5 79.8 L1276 79.8 Z" fill="#f0f0f0"/><path d="M1266.5 70 L1279 70 L1279 83 L1266.5 83 Z" fill="#e4e4e4" stroke="#5d5d5d" stroke-width="0.6"/><circle cx="1268.2" cy="68.6" r="3.8" fill="#ececec" stroke="#5d5d5d" stroke-width="0.6"/><path d="M1274 84.3 L1281 71.5 L1288.3 84.3 Z" fill="#ececec" stroke="#5d5d5d" stroke-width="0.8"/><rect x="1263.8" y="80.3" width="3.6" height="3.6" fill="#333" stroke="#6aa8ea" stroke-width="1.1"/><circle cx="1309.5" cy="56.6" r="2.3" fill="#e8e8e8"/><path d="M1308 62.2 V57.6 H1318 V62.2 Z" fill="#e0e0e0"/><path d="M1312 62.2 L1315.5 56.1 L1319 62.2 Z" fill="#f0f0f0" stroke="#5d5d5d" stroke-width="0.5"/><circle cx="1309.5" cy="79" r="2.3" fill="#e8e8e8"/><path d="M1308 84.6 V80 H1318 V84.6 Z" fill="#e0e0e0"/><path d="M1312 84.6 L1315.5 78.5 L1319 84.6 Z" fill="#f0f0f0" stroke="#5d5d5d" stroke-width="0.5"/><rect x="1306.6" y="61.8" width="2.2" height="2.2" fill="none" stroke="#6aa8ea" stroke-width="0.9"/><path d="M1313.5 81 L1319 75.3" stroke="#f2ae5a" stroke-width="1.6"/><path d="M1307 102 L1313.5 106.3 L1311 111.8 L1305.5 108.5 Z" fill="#6aa8ea"/><path d="M1313 103.5 L1319 97.2" stroke="#f2ae5a" stroke-width="1.6"/><path d="M1306.5 108 L1311 110.5" stroke="#d8e8f8" stroke-width="1"/><path d="M1317.50 129.40 L1323.50 129.40 L1320.5 132.80 Z" fill="#e0e0e0"/><path d="M1342.5 57.5 H1340 V84.5 H1342.5 M1360.0 57.5 H1362.5 V84.5 H1360.0" fill="none" stroke="#cfcfcf" stroke-width="1.5"/><rect x="1345.8" y="61.8" width="11" height="4.8" fill="#c4c4c4"/><rect x="1345.8" y="72.2" width="11" height="4.8" fill="#c4c4c4"/><path d="M1386.0 52.6 H1383.5 V65.6 H1386.0 M1404.0 52.6 H1406.5 V65.6 H1404.0" fill="none" stroke="#f2ae6a" stroke-width="1.2"/><path d="M1386.0 68.2 H1383.5 V81.4 H1386.0 M1404.0 68.2 H1406.5 V81.4 H1404.0" fill="none" stroke="#f2ae6a" stroke-width="1.2"/><rect x="1389.2" y="56.5" width="11" height="4.6" fill="#c4c4c4"/><rect x="1389.2" y="72.4" width="11" height="4.6" fill="#c4c4c4"/><path d="M1427.8 53.2 H1425.3 V80 H1427.8 M1445.5 53.2 H1448 V80 H1445.5" fill="none" stroke="#cfcfcf" stroke-width="1.1"/><rect x="1431" y="57.5" width="11" height="4.8" fill="#c4c4c4"/><rect x="1431" y="69" width="4" height="4.8" fill="#c4c4c4"/><rect x="1438.5" y="67.8" width="14.8" height="14.6" fill="#f4f4f4"/><rect x="1438.5" y="67.8" width="14.8" height="1.6" fill="#6aa8ea"/><path d="M1440 72.3 H1452 M1440 75.3 H1452 M1440 78.3 H1452" stroke="#8a8a8a" stroke-width="1.1"/><path d="M1385.1 92 H1382.6 V118.8 H1385.1 M1401.8 92 H1404.3 V118.8 H1401.8" fill="none" stroke="#cfcfcf" stroke-width="1.1"/><rect x="1388" y="96.7" width="11" height="4.8" fill="#c4c4c4"/><rect x="1388" y="108" width="11" height="4.8" fill="#c4c4c4"/><path d="M1397 117.5 L1407.5 107" stroke="#5d5d5d" stroke-width="4.6"/><path d="M1397 117.5 L1407.5 107" stroke="#f0a050" stroke-width="2.8"/><path d="M1395.6 119 L1397.8 116.2" stroke="#f4f4f4" stroke-width="2.6"/><rect x="1418.5" y="86.2" width="39.5" height="37" fill="#4e6a8a" stroke="#5a90d4" stroke-width="1"/><path d="M1427.8 92 H1425.3 V118.5 H1427.8 M1445.5 92 H1448 V118.5 H1445.5" fill="none" stroke="#cfcfcf" stroke-width="1.1"/><rect x="1431" y="96.6" width="11" height="4.8" fill="#c4c4c4"/><rect x="1431" y="108" width="11" height="4.8" fill="#c4c4c4"/><path d="M1444.5 104 V120 L1448 116.8 L1451 123.2 L1453.3 122.2 L1450.5 116 L1455 116 Z" fill="#f6f6f6"/><path d="M1476.8 61.5 V76.5 M1504 61.5 V76.5" stroke="#9a9a9a" stroke-width="1"/><path d="M1477.5 67.3 H1503.3" stroke="#6aa8ea" stroke-width="1.3"/><path d="M1481.3 64.3 L1477.5 67.3 L1481.3 70.3 M1499.5 64.3 L1503.3 67.3 L1499.5 70.3" fill="none" stroke="#6aa8ea" stroke-width="1.2"/><rect x="1476" y="76.5" width="29.6" height="5" fill="#f4b46e"/><path d="M1478 76.6 V79 M1480.5 76.6 V78.2 M1483 76.6 V79 M1485.5 76.6 V78.2 M1488 76.6 V79 M1490.5 76.6 V78.2 M1493 76.6 V79 M1495.5 76.6 V78.2 M1498 76.6 V79 M1500.5 76.6 V78.2 M1503 76.6 V79" stroke="#7a5a3a" stroke-width="0.6"/><path d="M1488.20 110 L1497.80 110 L1493 115 Z" fill="#e6e6e6"/><rect x="1645.3" y="51.5" width="13.8" height="10.8" fill="none" stroke="#a0a0a0" stroke-width="0.9" stroke-dasharray="1.2 1"/><path d="M1652 60 V52 M1649.8 54.5 L1652 51.6 L1654.3 54.5" fill="none" stroke="#6aa8ea" stroke-width="1.3"/><path d="M1655 59 V66.5 L1656.8 64.8 L1658.3 68 L1659.4 67.4 L1658 64.4 L1660.3 64.4 Z" fill="#eeeeee"/><path d="M1664.80 56.60 L1670.80 56.60 L1667.8 60.00 Z" fill="#e0e0e0"/><rect x="1645.4" y="75" width="14.6" height="12.8" fill="#6aaef4"/><path d="M1650.5 77.5 V85 L1652.3 83.3 L1653.8 86.3 L1655 85.8 L1653.6 82.8 L1656 82.8 Z" fill="#f4f4f4" stroke="#555" stroke-width="0.4"/><path d="M1645.5 95.5 H1659 L1653.5 101.5 V108 L1651 106.5 V101.5 Z" fill="#6aa8ea"/><path d="M1645.5 95.5 H1649 L1647.5 97.2 Z" fill="#f2ae6a"/><path d="M1656.5 101.5 L1654 106.3 H1656 L1654.5 110.8 L1658 105 H1656 L1657.8 101.5 Z" fill="#f2ae6a"/><rect x="1682.3" y="51.2" width="26.5" height="21.3" fill="none" stroke="#6aa8ea" stroke-width="1"/><rect x="1680.2" y="49.2" width="3.3" height="3.3" fill="#4a4a4a" stroke="#f2ae6a" stroke-width="0.9"/><circle cx="1691.2" cy="65" r="3.8" fill="#6ab2f8"/><circle cx="1700.3" cy="58.5" r="3.8" fill="#6ab2f8"/><path d="M1702.4 65 V79.5 L1705.5 76.8 L1708.2 82.6 L1710.5 81.6 L1707.8 75.8 L1711.8 75.8 Z" fill="#f4f4f4" stroke="#5d5d5d" stroke-width="0.5"/><path d="M1718.50 63.00 L1724.50 63.00 L1721.5 66.40 Z" fill="#e0e0e0"/><path d="M1694 88.5 H1711.7 V104 H1709 V91.3 H1694 Z" fill="#a8a8a8"/><path d="M1689 93 H1706.5 V108.5 H1704 V95.8 H1689 Z" fill="#b8b8b8"/><rect x="1682.4" y="98" width="18.3" height="15" fill="#fbb870"/><path d="M1718.50 98.60 L1724.50 98.60 L1721.5 102.00 Z" fill="#e0e0e0"/><path d="M1724.20 129.40 L1730.20 129.40 L1727.2 132.80 Z" fill="#e0e0e0"/><path d="M1750 76 L1750 58.5 Q1750 50.7 1757.6 50.7 L1761.3 50.7 L1761.3 60 Q1760 59.5 1759 60.5 L1758.8 65.2 L1756.5 65.5 L1756.5 76 Z" fill="#3ab8e6"/><defs><linearGradient id="ng" x1="0" y1="0" x2="0" y2="1"><stop offset="0" stop-color="#3fdcf0"/><stop offset="1" stop-color="#3e9ae0"/></linearGradient><linearGradient id="gg" x1="0" y1="0" x2="0" y2="1"><stop offset="0" stop-color="#8fe85a"/><stop offset="1" stop-color="#4eb238"/></linearGradient></defs><path d="M1750 76.3 L1750 58.5 Q1750 50.7 1758 50.7 L1762 50.7 L1762 59.8 L1759.5 59.8 Q1758.3 59.8 1758.3 61 L1758.3 65.3 L1756.5 65.3 L1756.5 76.3 Z" fill="url(#ng)"/><path d="M1757 76.3 L1757 66 L1761.3 66 Q1762.4 66 1762.4 64.8 L1762.4 50.7 L1772.5 50.7 L1772.5 68.5 Q1772.5 76.3 1764.8 76.3 Z" fill="url(#gg)"/><path d="M1758.20 105.5 L1766.80 105.5 L1762.5 110.1 Z" fill="#e6e6e6"/><path d="M1809 76.3 L1809 58.5 Q1809 50.7 1817 50.7 L1821 50.7 L1821 59.8 L1818.5 59.8 Q1817.3 59.8 1817.3 61 L1817.3 65.3 L1815.5 65.3 L1815.5 76.3 Z" fill="#ffffff"/><path d="M1816 76.3 L1816 66 L1820.3 66 Q1821.4 66 1821.4 64.8 L1821.4 50.7 L1831.5 50.7 L1831.5 68.5 Q1831.5 76.3 1823.8 76.3 Z" fill="#3e98e6"/><path d="M1818.5 55 L1813.3 60 L1813.3 71.5" fill="none" stroke="#3e98e6" stroke-width="1"/><circle cx="1818.6" cy="55" r="1.8" fill="#3e98e6"/><circle cx="1813.3" cy="60" r="1.8" fill="#3e98e6"/><circle cx="1813.3" cy="71.5" r="1.8" fill="#3e98e6"/><path d="M1817.70 105.5 L1826.30 105.5 L1822 110.1 Z" fill="#e6e6e6"/><path d="M1906 153.2 L1915.2 153.2 L1910.6 158.2 Z" fill="#e8e8e8"/><path d="M366.8 151.5 H371 V156.5 H366.8 Z M365.3 156.6 H372.5 M368.9 156.6 V160" fill="none" stroke="#f0f0f0" stroke-width="1.2"/><path d="M379.3 151.2 L387.3 159.2 M387.3 151.2 L379.3 159.2" stroke="#f4f4f4" stroke-width="1.5"/><path d="M608.3 152.3 L615.8 159.8 M615.8 152.3 L608.3 159.8" stroke="#e8e8e8" stroke-width="1.4"/><rect x="1.8" y="167.4" width="21.6" height="22" fill="#4e6a8a" stroke="#5a90d4" stroke-width="1"/><path d="M9 172 V179.5 M5.2 175.6 H12.8" stroke="#6eaaf0" stroke-width="1.3"/><path d="M14.2 179.6 V186.08 L15.78 184.64 L16.94 187.02 L18.02 186.51 L16.94 184.28 L18.95 184.28 Z" fill="#f4f4f4"/><path d="M31 174 V183.00 L33.20 181.00 L34.80 184.30 L36.30 183.60 L34.80 180.50 L37.60 180.50 Z" fill="#f4f4f4"/><line x1="48.6" y1="171" x2="48.6" y2="185.5" stroke="#3c3c3c" stroke-width="1"/><line x1="145.2" y1="171" x2="145.2" y2="185.5" stroke="#3c3c3c" stroke-width="1"/><line x1="195.8" y1="171" x2="195.8" y2="185.5" stroke="#3c3c3c" stroke-width="1"/><rect x="55.5" y="171" width="12.5" height="13" fill="none" stroke="#a8a8a8" stroke-width="0.9" stroke-dasharray="1 1"/><path d="M68 171 V184 H56" fill="none" stroke="#2f2f2f" stroke-width="1"/><path d="M66.3 178.6 V185.80 L68.06 184.20 L69.34 186.84 L70.54 186.28 L69.34 183.80 L71.58 183.80 Z" fill="#f4f4f4"/><rect x="77.8" y="171" width="12.6" height="13" fill="none" stroke="#a8a8a8" stroke-width="0.9" stroke-dasharray="1 1"/><rect x="81" y="174.5" width="6.3" height="6.5" fill="none" stroke="#a0a0a0" stroke-width="0.8" stroke-dasharray="1 0.8"/><path d="M89 179 V186.20 L90.76 184.60 L92.04 187.24 L93.24 186.68 L92.04 184.20 L94.28 184.20 Z" fill="#f4f4f4"/><path d="M107 171 V181 L102 176 Z M116 170.5 H106.8 L116 179.5 Z M100 179.5 L107.5 186.8 H100 Z" fill="#6eb4f8"/><path d="M110.5 179.8 V186.55 L112.15 185.05 L113.35 187.53 L114.47 187.00 L113.35 184.68 L115.45 184.68 Z" fill="#f4f4f4"/><path d="M123.2 170.3 H136.3 L131 175.5 V182.5 L128.6 181 V175.5 Z" fill="#6eaaf0"/><path d="M124.5 170.6 H128 L126.3 172.5 Z" fill="#f2ae6a"/><path d="M134.5 179 L132.7 183 H134.2 L133 186 L135.7 182 H134.4 L135.7 179 Z" fill="#f2ae6a"/><rect x="152.5" y="171.3" width="12.5" height="12.5" fill="none" stroke="#7a7a7a" stroke-width="0.8" stroke-dasharray="1 1.2"/><path d="M158.8 177.5 V171.3 M157.3 173 L158.8 171.3 L160.3 173" fill="none" stroke="#5a8fc8" stroke-width="1.3"/><path d="M162 179.5 V186.25 L163.65 184.75 L164.85 187.22 L165.97 186.70 L164.85 184.38 L166.95 184.38 Z" fill="#b8b8b8"/><path d="M176 176.5 L179.7 180.2 L185.7 173" fill="none" stroke="#5a8fc8" stroke-width="1.8"/><path d="M184.7 179.5 V186.25 L186.35 184.75 L187.55 187.22 L188.67 186.70 L187.55 184.38 L189.65 184.38 Z" fill="#b8b8b8"/><rect x="203.1" y="172.5" width="15.2" height="12.8" fill="#6eb0f8"/><path d="M208 175 V182.65 L209.87 180.95 L211.23 183.75 L212.50 183.16 L211.23 180.53 L213.61 180.53 Z" fill="#eeeeee"/><path d="M227 172 L235 180 M235 172 L227 180" stroke="#f2a55e" stroke-width="1"/><path d="M233.5 178.7 V185.18 L235.08 183.74 L236.24 186.12 L237.32 185.61 L236.24 183.38 L238.25 183.38 Z" fill="#f4f4f4"/><circle cx="255.7" cy="178.7" r="6.6" fill="#c4c4c4"/><text x="252.2" y="183" font-size="11" font-weight="bold" fill="#333">?</text><circle cx="131.5" cy="237.5" r="5.2" fill="#f2ae6a"/><path d="M128.64 240.62 L134.36 240.62 L133.58 245.30 L129.42 245.30 Z" fill="#f2ae6a"/><rect x="129.42" y="245.30" width="4.16" height="3.64" fill="#b8a56a"/><path d="M148.3 235 V244.6 M143.5 239.8 H153.1 M144.9 236.4 L151.7 243.2 M151.7 236.4 L144.9 243.2" stroke="#6c6c6c" stroke-width="1.3"/><path d="M163 239.5 V236.5 Q163 232.5 167 232.5 Q170.6 232.5 170.6 236" fill="none" stroke="#6c6c6c" stroke-width="1.6"/><rect x="159.8" y="239" width="12.6" height="8.4" rx="1.3" fill="#6c6c6c"/><rect x="179.6" y="233" width="10" height="5" rx="1" fill="#6c6c6c"/><rect x="177.8" y="237.2" width="13.6" height="9.6" rx="1.5" fill="#6c6c6c"/><rect x="195.3" y="235.6" width="8" height="8" fill="#000"/><path d="M196.3 237.2 L201.8 242.6 L196.3 242.6 Z" fill="#fff"/><text x="205" y="243.5" font-size="10" fill="#e6e6e6">0</text><rect x="125.3" y="254.8" width="9.6" height="9.6" fill="#000"/><path d="M126.3 256.40000000000003 L133.4 263.40000000000003 L126.3 263.40000000000003 Z" fill="#fff"/><line x1="125" y1="279.7" x2="182" y2="279.7" stroke="#d0d0d0" stroke-width="1"/><line x1="125" y1="319.7" x2="182" y2="319.7" stroke="#c0c0c0" stroke-width="1.3"/><path d="M373 220.5 H380.5 M373 379.3 H380.5 M373 417.5 H380.5 M373 476 H380.5 M373 574.3 H380.5" stroke="#e4e4e4" stroke-width="1.6"/></svg>
<div style="position:absolute;left:730px;top:11.44px;line-height:0;white-space:pre;font-size:12px;color:#333333;font-weight:normal;">Платформа nanoCAD x64 25 - не для коммерческого использования шаблон_воп.dwt</div><div style="position:absolute;left:55.9px;top:35.99px;line-height:0;white-space:pre;font-size:11px;color:#e2e2e2;font-weight:normal;">Главная</div><div style="position:absolute;left:120.0px;top:35.99px;line-height:0;white-space:pre;font-size:11px;color:#e2e2e2;font-weight:normal;">Построение</div><div style="position:absolute;left:205.0px;top:35.99px;line-height:0;white-space:pre;font-size:11px;color:#e2e2e2;font-weight:normal;">Вставка</div><div style="position:absolute;left:267.5px;top:35.99px;line-height:0;white-space:pre;font-size:11px;color:#e2e2e2;font-weight:normal;">Оформление</div><div style="position:absolute;left:360.5px;top:35.99px;line-height:0;white-space:pre;font-size:11px;color:#e2e2e2;font-weight:normal;">Зависимости</div><div style="position:absolute;left:452.0px;top:35.99px;line-height:0;white-space:pre;font-size:11px;color:#e2e2e2;font-weight:normal;">3D-инструменты</div><div style="position:absolute;left:562.1px;top:35.99px;line-height:0;white-space:pre;font-size:11px;color:#e2e2e2;font-weight:normal;">Вид</div><div style="position:absolute;left:604.3px;top:35.99px;line-height:0;white-space:pre;font-size:11px;color:#e2e2e2;font-weight:normal;">Настройки</div><div style="position:absolute;left:683.0px;top:35.99px;line-height:0;white-space:pre;font-size:11px;color:#e2e2e2;font-weight:normal;">Вывод</div><div style="position:absolute;left:739.0px;top:35.99px;line-height:0;white-space:pre;font-size:11px;color:#e2e2e2;font-weight:normal;">Растр</div><div style="position:absolute;left:790.9px;top:35.99px;line-height:0;white-space:pre;font-size:11px;color:#e2e2e2;font-weight:normal;">Облака точек</div><div style="position:absolute;left:885.4px;top:35.99px;line-height:0;white-space:pre;font-size:11px;color:#e2e2e2;font-weight:normal;">Топоплан</div><div style="position:absolute;left:959.0px;top:35.99px;line-height:0;white-space:pre;font-size:11px;color:#e2e2e2;font-weight:normal;">Организация</div><div style="position:absolute;left:109.8px;top:130.79px;line-height:0;white-space:pre;font-size:11px;color:#d2d2d2;font-weight:normal;">Черчение</div><div style="position:absolute;left:281.1px;top:130.79px;line-height:0;white-space:pre;font-size:11px;color:#d2d2d2;font-weight:normal;">Редактирование</div><div style="position:absolute;left:511.3px;top:130.79px;line-height:0;white-space:pre;font-size:11px;color:#d2d2d2;font-weight:normal;">Слои</div><div style="position:absolute;left:800.2px;top:130.79px;line-height:0;white-space:pre;font-size:11px;color:#d2d2d2;font-weight:normal;">Свойства</div><div style="position:absolute;left:1010.1px;top:130.79px;line-height:0;white-space:pre;font-size:11px;color:#d2d2d2;font-weight:normal;">Оформление</div><div style="position:absolute;left:1145.5px;top:130.79px;line-height:0;white-space:pre;font-size:11px;color:#d2d2d2;font-weight:normal;">Буфер обмена</div><div style="position:absolute;left:1278.0px;top:130.79px;line-height:0;white-space:pre;font-size:11px;color:#d2d2d2;font-weight:normal;">Блок</div><div style="position:absolute;left:1376.5px;top:130.79px;line-height:0;white-space:pre;font-size:11px;color:#d2d2d2;font-weight:normal;">Группа</div><div style="position:absolute;left:1577.5px;top:130.79px;line-height:0;white-space:pre;font-size:11px;color:#d2d2d2;font-weight:normal;">Утилиты</div><div style="position:absolute;left:8.7px;top:96.89px;line-height:0;white-space:pre;font-size:11px;color:#e0e0e0;font-weight:normal;">Отрезок</div><div style="position:absolute;left:57.8px;top:96.89px;line-height:0;white-space:pre;font-size:11px;color:#e0e0e0;font-weight:normal;">Полилиния</div><div style="position:absolute;left:120.6px;top:97.09px;line-height:0;white-space:pre;font-size:11px;color:#e0e0e0;font-weight:normal;">Окружность</div><div style="position:absolute;left:196.4px;top:97.09px;line-height:0;white-space:pre;font-size:11px;color:#e0e0e0;font-weight:normal;">Дуга</div><div style="position:absolute;left:389.3px;top:97.09px;line-height:0;white-space:pre;font-size:11px;color:#e0e0e0;font-weight:normal;">Слои</div><div style="position:absolute;left:426.9px;top:97.09px;line-height:0;white-space:pre;font-size:11px;color:#e0e0e0;font-weight:normal;">Диспетчер</div><div style="position:absolute;left:440.5px;top:112.09px;line-height:0;white-space:pre;font-size:11px;color:#e0e0e0;font-weight:normal;">слоёв</div><div style="position:absolute;left:676.5px;top:97.09px;line-height:0;white-space:pre;font-size:11px;color:#e0e0e0;font-weight:normal;">Свойства</div><div style="position:absolute;left:904.0px;top:97.09px;line-height:0;white-space:pre;font-size:11px;color:#e0e0e0;font-weight:normal;">Копирование</div><div style="position:absolute;left:918.1px;top:112.09px;line-height:0;white-space:pre;font-size:11px;color:#e0e0e0;font-weight:normal;">свойств</div><div style="position:absolute;left:987.8px;top:97.09px;line-height:0;white-space:pre;font-size:11px;color:#e0e0e0;font-weight:normal;">Текст</div><div style="position:absolute;left:1026.3px;top:97.09px;line-height:0;white-space:pre;font-size:11px;color:#e0e0e0;font-weight:normal;">Размеры</div><div style="position:absolute;left:1117.0px;top:97.09px;line-height:0;white-space:pre;font-size:11px;color:#e0e0e0;font-weight:normal;">Вставить</div><div style="position:absolute;left:1259.0px;top:97.09px;line-height:0;white-space:pre;font-size:11px;color:#e0e0e0;font-weight:normal;">Вставка</div><div style="position:absolute;left:1263.5px;top:112.09px;line-height:0;white-space:pre;font-size:11px;color:#e0e0e0;font-weight:normal;">блока</div><div style="position:absolute;left:1333.0px;top:97.09px;line-height:0;white-space:pre;font-size:11px;color:#e0e0e0;font-weight:normal;">Группа</div><div style="position:absolute;left:1467.0px;top:97.09px;line-height:0;white-space:pre;font-size:11px;color:#e0e0e0;font-weight:normal;">Сведения</div><div style="position:absolute;left:1738.1px;top:94.19px;line-height:0;white-space:pre;font-size:11px;color:#e0e0e0;font-weight:normal;">NormaCS</div><div style="position:absolute;left:1791.2px;top:94.19px;line-height:0;white-space:pre;font-size:11px;color:#e0e0e0;font-weight:normal;">Экспертиза</div><div style="position:absolute;left:791.5px;top:80.79px;line-height:0;white-space:pre;font-size:11px;color:#e0e0e0;font-weight:normal;">По слою</div><div style="position:absolute;left:791.5px;top:103.09px;line-height:0;white-space:pre;font-size:11px;color:#e0e0e0;font-weight:normal;">По слою</div><div style="position:absolute;left:747.5px;top:58.69px;line-height:0;white-space:pre;font-size:11px;color:#e0e0e0;font-weight:normal;">По слою</div><div style="position:absolute;left:1523.1px;top:96.49px;line-height:0;white-space:pre;font-size:11px;color:#e0e0e0;font-weight:normal;transform:scaleX(0.885);transform-origin:0 0;">URS_PROCESS_MODEL</div><div style="position:absolute;left:4.5px;top:155.09px;line-height:0;white-space:pre;font-size:11px;color:#cfcfcf;font-weight:normal;">Свойства</div><div style="position:absolute;left:7.5px;top:201.73px;line-height:0;white-space:pre;font-size:10px;color:#dcdcdc;font-weight:normal;">Объекты</div><div style="position:absolute;left:123.5px;top:201.73px;line-height:0;white-space:pre;font-size:10px;color:#a8a8a8;font-weight:normal;">Нет набора</div><div style="position:absolute;left:7px;top:220.02px;line-height:0;white-space:pre;font-size:11.5px;color:#f2f2f2;font-weight:bold;">Общие</div><div style="position:absolute;left:7.5px;top:240.73px;line-height:0;white-space:pre;font-size:10px;color:#dcdcdc;font-weight:normal;">Слой</div><div style="position:absolute;left:7.5px;top:260.74px;line-height:0;white-space:pre;font-size:10px;color:#dcdcdc;font-weight:normal;">Цвет</div><div style="position:absolute;left:7.5px;top:280.74px;line-height:0;white-space:pre;font-size:10px;color:#dcdcdc;font-weight:normal;">Тип линий</div><div style="position:absolute;left:7.5px;top:300.74px;line-height:0;white-space:pre;font-size:10px;color:#dcdcdc;font-weight:normal;">Масштаб типа линий</div><div style="position:absolute;left:123.5px;top:300.74px;line-height:0;white-space:pre;font-size:10px;color:#e6e6e6;font-weight:normal;">100</div><div style="position:absolute;left:7.5px;top:320.74px;line-height:0;white-space:pre;font-size:10px;color:#dcdcdc;font-weight:normal;">Вес линий</div><div style="position:absolute;left:7.5px;top:340.74px;line-height:0;white-space:pre;font-size:10px;color:#dcdcdc;font-weight:normal;">Прозрачность</div><div style="position:absolute;left:123.5px;top:340.74px;line-height:0;white-space:pre;font-size:10px;color:#e6e6e6;font-weight:normal;">По слою</div><div style="position:absolute;left:7.5px;top:360.74px;line-height:0;white-space:pre;font-size:10px;color:#dcdcdc;font-weight:normal;">Толщина</div><div style="position:absolute;left:123.5px;top:360.74px;line-height:0;white-space:pre;font-size:10px;color:#e6e6e6;font-weight:normal;">0</div><div style="position:absolute;left:7px;top:379.02px;line-height:0;white-space:pre;font-size:11.5px;color:#f2f2f2;font-weight:bold;">3D-визуализация</div><div style="position:absolute;left:7.5px;top:399.24px;line-height:0;white-space:pre;font-size:10px;color:#dcdcdc;font-weight:normal;">Материал</div><div style="position:absolute;left:123.5px;top:399.24px;line-height:0;white-space:pre;font-size:10px;color:#e6e6e6;font-weight:normal;">По слою</div><div style="position:absolute;left:7px;top:417.02px;line-height:0;white-space:pre;font-size:11.5px;color:#f2f2f2;font-weight:bold;">Стили</div><div style="position:absolute;left:7.5px;top:437.74px;line-height:0;white-space:pre;font-size:10px;color:#dcdcdc;font-weight:normal;">Стиль текста</div><div style="position:absolute;left:123.5px;top:437.74px;line-height:0;white-space:pre;font-size:10px;color:#e6e6e6;font-weight:normal;">ГОСТ 2.304</div><div style="position:absolute;left:7.5px;top:457.74px;line-height:0;white-space:pre;font-size:10px;color:#dcdcdc;font-weight:normal;">Размерный стиль</div><div style="position:absolute;left:123.5px;top:457.74px;line-height:0;white-space:pre;font-size:10px;color:#e6e6e6;font-weight:normal;">СПДС</div><div style="position:absolute;left:7px;top:476.02px;line-height:0;white-space:pre;font-size:11.5px;color:#f2f2f2;font-weight:bold;">Стиль печати</div><div style="position:absolute;left:7.5px;top:496.24px;line-height:0;white-space:pre;font-size:10px;color:#dcdcdc;font-weight:normal;">Стиль печати</div><div style="position:absolute;left:123.5px;top:496.24px;line-height:0;white-space:pre;font-size:10px;color:#9a9a9a;font-weight:normal;">По цвету</div><div style="position:absolute;left:7.5px;top:515.74px;line-height:0;white-space:pre;font-size:10px;color:#dcdcdc;font-weight:normal;">Таблица стилей печати</div><div style="position:absolute;left:123.5px;top:515.74px;line-height:0;white-space:pre;font-size:10px;color:#e6e6e6;font-weight:normal;">Нет</div><div style="position:absolute;left:7.5px;top:535.74px;line-height:0;white-space:pre;font-size:10px;color:#dcdcdc;font-weight:normal;">Пространство таблиц...</div><div style="position:absolute;left:123.5px;top:535.74px;line-height:0;white-space:pre;font-size:10px;color:#9a9a9a;font-weight:normal;">Модель</div><div style="position:absolute;left:7.5px;top:555.74px;line-height:0;white-space:pre;font-size:10px;color:#dcdcdc;font-weight:normal;">Тип стилей печати</div><div style="position:absolute;left:123.5px;top:555.74px;line-height:0;white-space:pre;font-size:10px;color:#9a9a9a;font-weight:normal;">Недоступно</div><div style="position:absolute;left:7px;top:574.02px;line-height:0;white-space:pre;font-size:11.5px;color:#f2f2f2;font-weight:bold;">Разное</div><div style="position:absolute;left:7.5px;top:594.24px;line-height:0;white-space:pre;font-size:10px;color:#dcdcdc;font-weight:normal;">Знак ПСК Вкл</div><div style="position:absolute;left:123.5px;top:594.24px;line-height:0;white-space:pre;font-size:10px;color:#e6e6e6;font-weight:normal;">Да</div><div style="position:absolute;left:7.5px;top:614.24px;line-height:0;white-space:pre;font-size:10px;color:#dcdcdc;font-weight:normal;">Знак ПСК в начале к...</div><div style="position:absolute;left:123.5px;top:614.24px;line-height:0;white-space:pre;font-size:10px;color:#e6e6e6;font-weight:normal;">Да</div><div style="position:absolute;left:7.5px;top:634.24px;line-height:0;white-space:pre;font-size:10px;color:#dcdcdc;font-weight:normal;">ПСК в каждом ВЭкране</div><div style="position:absolute;left:123.5px;top:634.24px;line-height:0;white-space:pre;font-size:10px;color:#e6e6e6;font-weight:normal;">Да</div><div style="position:absolute;left:7.5px;top:654.24px;line-height:0;white-space:pre;font-size:10px;color:#dcdcdc;font-weight:normal;">Имя ПСК</div><div style="position:absolute;left:123.5px;top:654.24px;line-height:0;white-space:pre;font-size:10px;color:#e6e6e6;font-weight:normal;">Мировая СК</div><div style="position:absolute;left:7.5px;top:674.24px;line-height:0;white-space:pre;font-size:10px;color:#dcdcdc;font-weight:normal;">Визуальный стиль</div><div style="position:absolute;left:123.5px;top:674.24px;line-height:0;white-space:pre;font-size:10px;color:#e6e6e6;font-weight:normal;">2D-каркас</div><div style="position:absolute;left:138.5px;top:260.94px;line-height:0;white-space:pre;font-size:10px;color:#e6e6e6;font-weight:normal;">По слою</div><div style="position:absolute;left:184.5px;top:280.94px;line-height:0;white-space:pre;font-size:10px;color:#e6e6e6;font-weight:normal;">По слою</div><div style="position:absolute;left:184.5px;top:320.94px;line-height:0;white-space:pre;font-size:10px;color:#e6e6e6;font-weight:normal;">По слою</div><div style="position:absolute;left:502px;top:155.89px;line-height:0;white-space:pre;font-size:11px;color:#f2f2f2;font-weight:normal;">шаблон_воп.dwt</div>
</body></html>
